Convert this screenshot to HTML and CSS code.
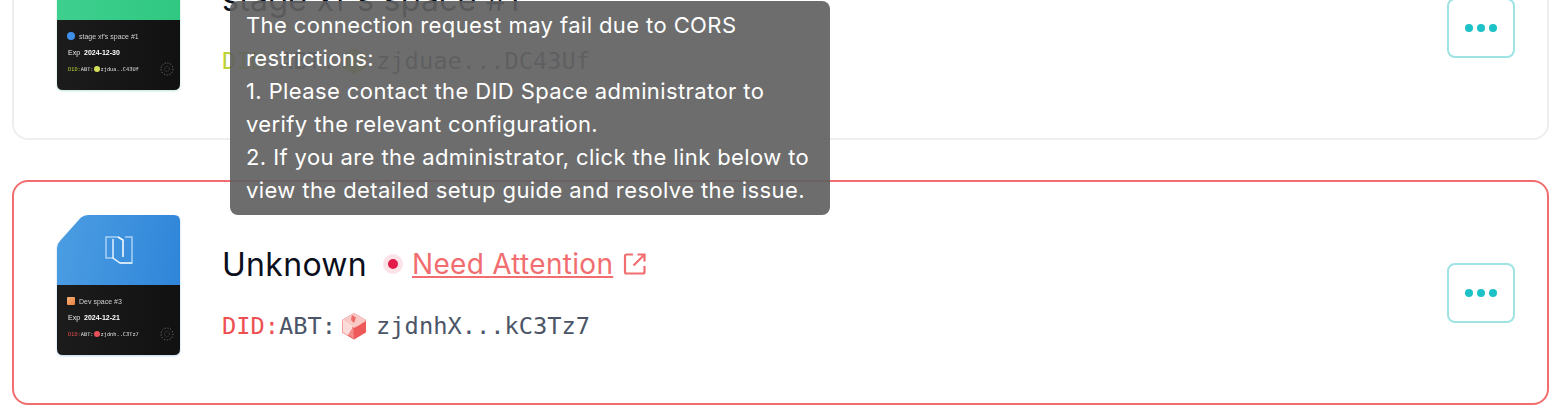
FILE: index.html
```html
<!DOCTYPE html>
<html lang="en">
<head>
    <meta charset="UTF-8">
    <title>DID Spaces</title>
    <link rel="stylesheet" href="styles.css">
</head>
<body>
    <div class="list">
        <div class="card">
            <div class="thumb-wrap green-glow">
                <div class="thumb">
                    <div class="thumb-top green"></div>
                    <div class="thumb-bottom">
                        <div class="thumb-name"><span class="dot-blue"></span>stage xf's space #1</div>
                        <div class="thumb-exp">Exp <b>2024-12-30</b></div>
                        <div class="thumb-did"><span class="lime">DID:</span>ABT:<span class="dot-lime"></span>zjdua..C43Uf</div>
                        <svg class="seal" viewBox="0 0 14 14"><circle cx="7" cy="7" r="6" fill="none" stroke="#aaa" stroke-width=".6" stroke-dasharray="1.2 1.6"/><circle cx="7" cy="7" r="2.500" fill="none" stroke="#777" stroke-width=".5" stroke-dasharray="1 1"/></svg>
                    </div>
                </div>
            </div>
            <div class="info">
                <div class="title"><span class="name">stage xf's space #1</span></div>
                <div class="did"><span class="lime">DID:</span>ABT:<svg class="did-icon" viewBox="0 0 28 28"><path d="M14 2L25 8.500V20L14 26.500L3 20V8.500Z" fill="#c5d94f" stroke="#c5d94f" stroke-width="2" stroke-linejoin="round"/></svg>zjduae...DC43Uf</div>
            </div>
            <button class="more"><span></span><span></span><span></span></button>
        </div>

        <div class="card danger">
            <div class="thumb-wrap blue-glow">
                <div class="thumb">
                    <div class="thumb-top blue">
                        <svg class="logo" viewBox="0 0 28 28" fill="none" stroke-width="1.500">
                            <path d="M8 22H1V1H13" stroke="#a9d0f3"/>
                            <path d="M20 1H27V27H15" stroke="#a9d0f3"/>
                            <path d="M13 1L18 4V21" stroke="#ffffff"/>
                            <path d="M8 3V22L15 27H27" stroke="#e6f2fc"/>
                        </svg>
                    </div>
                    <div class="thumb-bottom">
                        <div class="thumb-name"><span class="square-orange"></span>Dev space #3</div>
                        <div class="thumb-exp">Exp <b>2024-12-21</b></div>
                        <div class="thumb-did"><span class="red">DID:</span>ABT:<span class="dot-red"></span>zjdnh..C3Tz7</div>
                        <svg class="seal" viewBox="0 0 14 14"><circle cx="7" cy="7" r="6" fill="none" stroke="#aaa" stroke-width=".6" stroke-dasharray="1.2 1.6"/><circle cx="7" cy="7" r="2.500" fill="none" stroke="#777" stroke-width=".5" stroke-dasharray="1 1"/></svg>
                    </div>
                </div>
            </div>
            <div class="info">
                <div class="title">
                    <span class="name">Unknown</span>
                    <span class="status-dot"></span>
                    <a class="attention" href="#">Need Attention</a>
                    <svg class="external" viewBox="0 0 24 24" fill="none" stroke="#f26d6f" stroke-width="2.200"><path d="M10 2.500H3.500A1.500 1.500 0 0 0 2 4V20A1.500 1.500 0 0 0 3.500 21.500H20A1.500 1.500 0 0 0 21.500 20V14"/><path d="M14.500 2.500H21.500V9.500M21 3L10.500 13.500"/></svg>
                </div>
                <div class="did"><span class="red">DID:</span>ABT:<svg class="did-icon" viewBox="0 0 28 28"><path d="M14 2L25 8.500V20L14 26.500L3 20V8.500Z" fill="#ee5a5a" stroke="#ee5a5a" stroke-width="2" stroke-linejoin="round"/><path d="M14 2L25 8.500L18 13L14 15L3 8.500Z" fill="#f9c9c6" stroke="#f9c9c6" stroke-width="1.500" stroke-linejoin="round"/><path d="M3 8.500L11 13L13 19L8 23L3 20Z" fill="#fcdcda" stroke="#fcdcda" stroke-linejoin="round"/><path d="M12 3L16 5.500L14 11L11 8Z" fill="#ef6b69"/><path d="M13 15L14 26.500L8 23Z" fill="#f28a87"/></svg>zjdnhX...kC3Tz7</div>
            </div>
            <button class="more"><span></span><span></span><span></span></button>
        </div>
    </div>

    <div class="tooltip">The connection request may fail due to CORS restrictions:<br>1. Please contact the DID Space administrator to verify the relevant configuration.<br>2. If you are the administrator, click the link below to view the detailed setup guide and resolve the issue.</div>
</body>
</html>
```

FILE: styles.css
```css
* {
    margin: 0;
    padding: 0;
    box-sizing: border-box;
}
body {
    height: 420px;
    overflow: hidden;
    background: #fff;
    font-family: Inter, "Liberation Sans", sans-serif;
}
.list {
    margin-top: -85px;
    padding: 0 11px 0 12px;
    display: flex;
    flex-direction: column;
    gap: 40px;
}
.card {
    height: 225px;
    border: 2px solid #eeeeee;
    border-radius: 16px;
    padding: 33px 32px 0 43px;
    display: flex;
    align-items: flex-start;
}
.card.danger {
    border-color: #f26d6f;
}
.thumb-wrap {
    flex: none;
}
.green-glow {
    filter: drop-shadow(0 1px 1px rgba(60, 190, 140, 0.35));
}
.blue-glow {
    filter: drop-shadow(0 1px 1px rgba(60, 130, 210, 0.35));
}
.thumb {
    width: 123px;
    height: 140px;
    display: flex;
    flex-direction: column;
    clip-path: path("M24 2.500 Q27 0 31 0 H117 Q123 0 123 6 V134 Q123 140 117 140 H6 Q0 140 0 134 V33 Q0 29 3 26 Z");
}
.thumb-top {
    height: 70px;
    display: flex;
    align-items: center;
    justify-content: center;
}
.green {
    background: linear-gradient(90deg, #3ecf8e, #2fc882);
}
.blue {
    background: linear-gradient(100deg, #4c9ee2, #2f85d9);
}
.logo {
    width: 28px;
    height: 28px;
}
.thumb-bottom {
    position: relative;
    flex: 1;
    background: linear-gradient(90deg, #1c1c1c, #111111);
    color: #cfcfcf;
    font-size: 7px;
    padding: 12px 0 0 10px;
    font-family: "Liberation Sans", sans-serif;
}
.thumb-name {
    height: 8px;
    display: flex;
    align-items: center;
    gap: 4px;
}
.thumb-exp {
    margin-top: 9px;
    margin-left: 1px;
    color: #e8e8e8;
}
.thumb-exp b {
    margin-left: 2px;
    color: #fff;
}
.thumb-did {
    margin-top: 10px;
    margin-left: 1px;
    font-family: "DejaVu Sans Mono", monospace;
    font-size: 5.300px;
    display: flex;
    align-items: center;
    color: #e0e0e0;
}
.dot-blue,
.dot-lime,
.dot-red,
.square-orange {
    display: inline-block;
    border-radius: 50%;
}
.dot-blue {
    width: 8px;
    height: 8px;
    background: #3f8fe8;
}
.square-orange {
    width: 8px;
    height: 8px;
    border-radius: 1px;
    background: linear-gradient(135deg, #f7b27a, #e9803c);
}
.dot-lime,
.dot-red {
    width: 6px;
    height: 6px;
    margin-right: 1px;
}
.dot-lime {
    background: #d5e05a;
}
.dot-red {
    background: #e8505a;
}
.seal {
    position: absolute;
    right: 6px;
    bottom: 14px;
    width: 14px;
    height: 14px;
}
.lime {
    color: #bcd233;
}
.red {
    color: #ee4f52;
}
.info {
    flex: 1;
    margin-left: 42px;
    padding-top: 27px;
}
.title {
    height: 44px;
    display: flex;
    align-items: center;
}
.name {
    font-size: 32px;
    letter-spacing: 0.3px;
    color: #0b0f1c;
}
.status-dot {
    width: 20px;
    height: 20px;
    margin: 0 9px 0 16px;
    border-radius: 50%;
    background: #e31b4b;
    border: 5px solid #fde3e8;
}
.attention {
    font-size: 28px;
    letter-spacing: 0.3px;
    color: #f26d6f;
}
.external {
    width: 24px;
    height: 24px;
    margin-left: 10px;
}
.did {
    margin-top: 26px;
    display: flex;
    align-items: center;
    font-family: "DejaVu Sans Mono", monospace;
    font-size: 23.700px;
    color: #4b5567;
    white-space: pre;
}
.did-icon {
    width: 28px;
    height: 28px;
    margin: 0 8px 0 4px;
}
.more {
    width: 68px;
    height: 60px;
    margin-top: 48px;
    background: #fff;
    border: 2px solid #a0e3e4;
    border-radius: 8px;
    display: flex;
    align-items: center;
    justify-content: center;
    gap: 4px;
}
.more span {
    width: 8px;
    height: 8px;
    border-radius: 50%;
    background: #1cc2c8;
}
.tooltip {
    position: absolute;
    top: 1px;
    left: 230px;
    width: 600px;
    height: 214px;
    padding: 8px 16px;
    border-radius: 8px;
    background: rgba(97, 97, 97, 0.92);
    color: #fff;
    font-size: 22px;
    line-height: 33px;
    letter-spacing: 0.4px;
}
```
